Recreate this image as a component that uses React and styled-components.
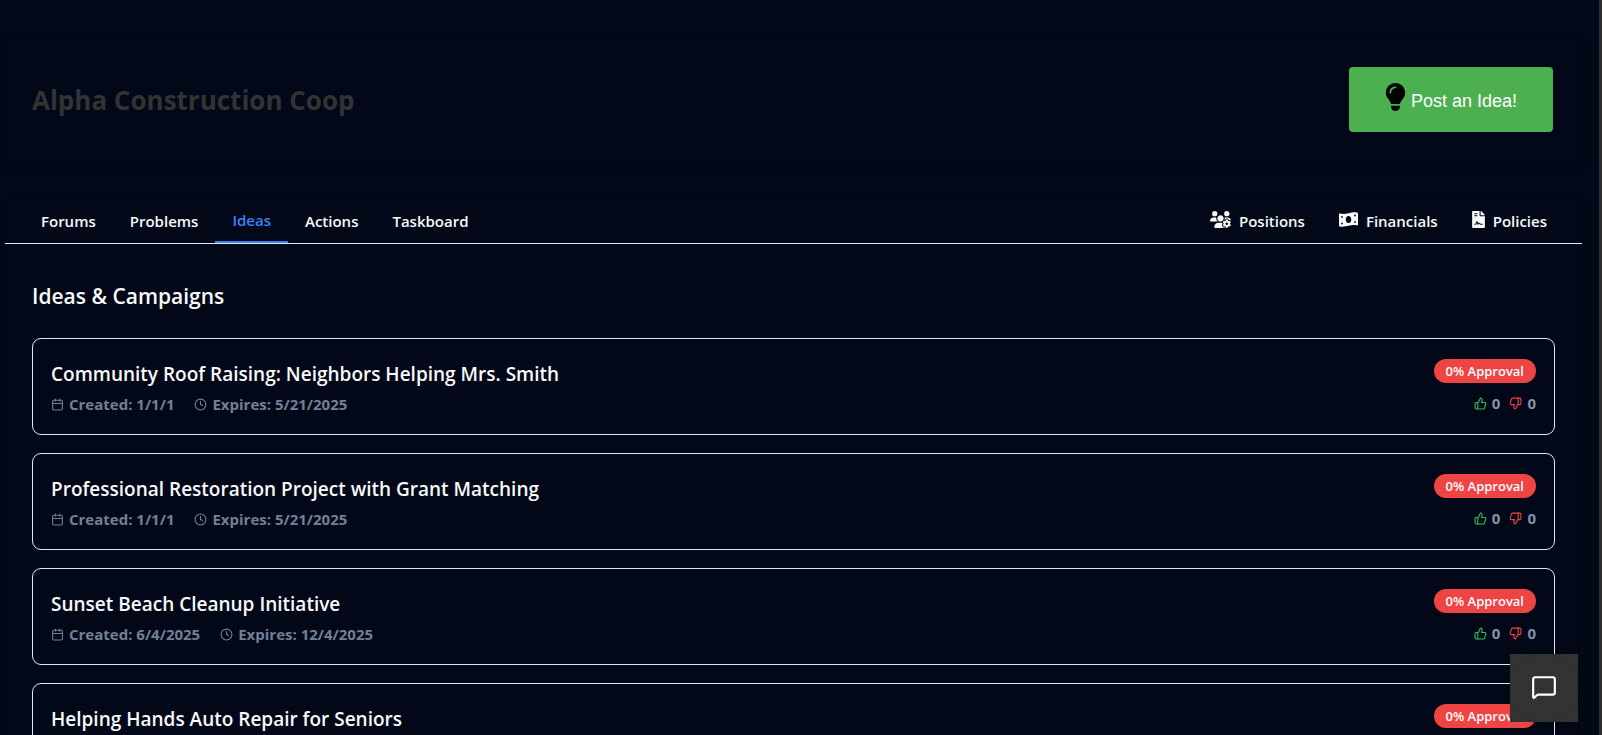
import React from "react";
import styled, { createGlobalStyle, css } from "styled-components";
import { FaUsersGear, FaLightbulb } from "react-icons/fa6";
import { FaFileContract } from "react-icons/fa";
import { Calendar, Clock, ThumbsUp, ThumbsDown, MessageSquare } from "lucide-react";

const GlobalStyle = createGlobalStyle`
  *, *::before, *::after { box-sizing: border-box; }
  body {
    margin: 0;
    background: #020817;
    color: #f8fafc;
    font-family: "Open Sans", "Noto Sans", sans-serif;
    font-size: 15px;
  }
  h1, h2, h3, p, ul { margin: 0; padding: 0; }
`;

const Viewport = styled.div`
  height: 100vh;
  overflow: hidden auto;
  scrollbar-width: none;
  border-right: 3px solid #2c2c2c;
`;

const Page = styled.main`
  display: flex;
  flex-direction: column;
  gap: 36px;
  padding: 37px 17px 37px 5px;
`;

const panel = css`
  border-radius: 9px;
  box-shadow: 0 4px 8px rgba(0, 0, 0, 0.2);
`;

const Header = styled.header`
  ${panel}
  display: flex;
  align-items: center;
  justify-content: space-between;
  padding: 30px 29px 31px 27px;
`;

const OrgName = styled.h1`
  color: #333;
  font-size: 26px;
  font-weight: 700;
  line-height: 36px;
`;

const PostButton = styled.button`
  display: flex;
  align-items: center;
  gap: 5px;
  height: 65px;
  padding: 4px 36px 0;
  border: 0;
  border-radius: 4px;
  background: #4caf50;
  color: #fff;
  font-family: "Liberation Sans", Arial, sans-serif;
  font-size: 18px;
  cursor: pointer;

  svg {
    width: 21px;
    height: 28px;
    margin-bottom: 9px;
    color: #000;
  }
`;

const Board = styled.section`
  ${panel}
`;

const TabBar = styled.nav`
  display: flex;
  justify-content: space-between;
  padding: 0 18px 0 19px;
  border-bottom: 1px solid #e2e8f0;
`;

const TabGroup = styled.div`
  display: flex;
`;

const Tab = styled.a`
  display: flex;
  align-items: center;
  gap: 8px;
  height: 44px;
  padding: 0 17px;
  border-bottom: ${(p) => (p.$active ? "2px solid #3b82f6" : "0")};
  color: ${(p) => (p.$active ? "#3b82f6" : "#f8fafc")};
  font-size: 15px;
  font-weight: 600;
  line-height: 24px;
  text-decoration: none;

  svg {
    width: ${(p) => p.$iconWidth}px;
    height: 17px;
    margin-bottom: 3px;
  }
`;

const Content = styled.div`
  padding: 36px 27px;
`;

const SectionTitle = styled.h2`
  margin-bottom: 26px;
  font-size: 21px;
  font-weight: 600;
  line-height: 32px;
`;

const IdeaList = styled.ul`
  display: flex;
  flex-direction: column;
  gap: 18px;
  list-style: none;
`;

const IdeaCard = styled.li`
  display: flex;
  justify-content: space-between;
  padding: 20px 18px 18px;
  border: 1px solid #e2e8f0;
  border-radius: 9px;
`;

const IdeaTitle = styled.h3`
  margin-bottom: 3px;
  font-size: 19px;
  font-weight: 600;
  line-height: 30px;
`;

const Row = styled.div`
  display: flex;
  align-items: center;
  gap: ${(p) => p.$gap}px;
`;

const Meta = styled.span`
  display: inline-flex;
  align-items: center;
  gap: 5px;
  color: #718096;
  font-weight: 700;
  line-height: 24px;
`;

const Votes = styled(Meta)`
  color: #8492a6;

  svg {
    color: ${(p) => p.$tone};
  }
`;

const Approval = styled.div`
  display: flex;
  flex-direction: column;
  align-items: flex-end;
  gap: 8px;
`;

const Badge = styled.span`
  padding: 0 12px;
  border-radius: 12px;
  background: #ef4444;
  color: #fff;
  font-size: 13px;
  font-weight: 600;
  line-height: 24px;
`;

const ChatButton = styled.button`
  position: fixed;
  right: 24px;
  bottom: 13px;
  width: 68px;
  height: 68px;
  padding: 0;
  border: 0;
  background: #333;
  color: #fff;
  cursor: pointer;
`;

const ChatDisc = styled.span`
  display: grid;
  place-items: center;
  height: 68px;
  padding-bottom: 2px;
  border-radius: 50%;
  box-shadow: 0 0 5px rgba(0, 0, 0, 0.15);
`;

function BanknoteIcon() {
  return (
    <svg viewBox="0 0 19 17" aria-hidden="true">
      <path
        fill="currentColor"
        d="M1 2.6C4 3.4 7 3 9.5 2.3S15.3.9 18.2 1.6Q19 1.9 19 2.7V13.6Q19 14.6 18 14.4C15 13.8 12 14.2 9.5 14.8S3.700 16 .8 15.400Q0 15.200 0 14.400V3.400Q0 2.400 1 2.600Z"
      />
      <g fill="#020817">
        <ellipse cx="9.500" cy="8.500" rx="2.700" ry="3.500" />
        <circle cx="3" cy="6" r="0.900" />
        <circle cx="3" cy="12.500" r="0.900" />
        <circle cx="16" cy="4.500" r="0.900" />
        <circle cx="16" cy="11" r="0.900" />
      </g>
    </svg>
  );
}

const tabs = ["Forums", "Problems", "Ideas", "Actions", "Taskboard"];

const resources = [
  { label: "Positions", Icon: FaUsersGear, width: 21 },
  { label: "Financials", Icon: BanknoteIcon, width: 19 },
  { label: "Policies", Icon: FaFileContract, width: 13 },
];

const ideas = [
  { title: "Community Roof Raising: Neighbors Helping Mrs. Smith", created: "1/1/1", expires: "5/21/2025" },
  { title: "Professional Restoration Project with Grant Matching", created: "1/1/1", expires: "5/21/2025" },
  { title: "Sunset Beach Cleanup Initiative", created: "6/4/2025", expires: "12/4/2025" },
  { title: "Helping Hands Auto Repair for Seniors", created: "6/4/2025", expires: "12/4/2025" },
];

function Idea({ title, created, expires }) {
  return (
    <IdeaCard>
      <div>
        <IdeaTitle>{title}</IdeaTitle>
        <Row $gap={20}>
          <Meta><Calendar size={13} />Created: {created}</Meta>
          <Meta><Clock size={13} />Expires: {expires}</Meta>
        </Row>
      </div>
      <Approval>
        <Badge>0% Approval</Badge>
        <Row $gap={9}>
          <Votes $tone="#22c55e"><ThumbsUp size={13} />0</Votes>
          <Votes $tone="#ef4444"><ThumbsDown size={13} />0</Votes>
        </Row>
      </Approval>
    </IdeaCard>
  );
}

export default function App() {
  return (
    <>
      <GlobalStyle />
      <Viewport>
        <Page>
          <Header>
            <OrgName>Alpha Construction Coop</OrgName>
            <PostButton type="button"><FaLightbulb />Post an Idea!</PostButton>
          </Header>
          <Board>
            <TabBar>
              <TabGroup>
                {tabs.map((t) => (
                  <Tab key={t} href={`#${t.toLowerCase()}`} $active={t === "Ideas"}>{t}</Tab>
                ))}
              </TabGroup>
              <TabGroup>
                {resources.map(({ label, Icon, width }) => (
                  <Tab key={label} href={`#${label.toLowerCase()}`} $iconWidth={width}><Icon />{label}</Tab>
                ))}
              </TabGroup>
            </TabBar>
            <Content>
              <SectionTitle>Ideas &amp; Campaigns</SectionTitle>
              <IdeaList>
                {ideas.map((idea) => <Idea key={idea.title} {...idea} />)}
              </IdeaList>
            </Content>
          </Board>
        </Page>
      </Viewport>
      <ChatButton type="button" aria-label="Open chat">
        <ChatDisc><MessageSquare size={26} /></ChatDisc>
      </ChatButton>
    </>
  );
}
